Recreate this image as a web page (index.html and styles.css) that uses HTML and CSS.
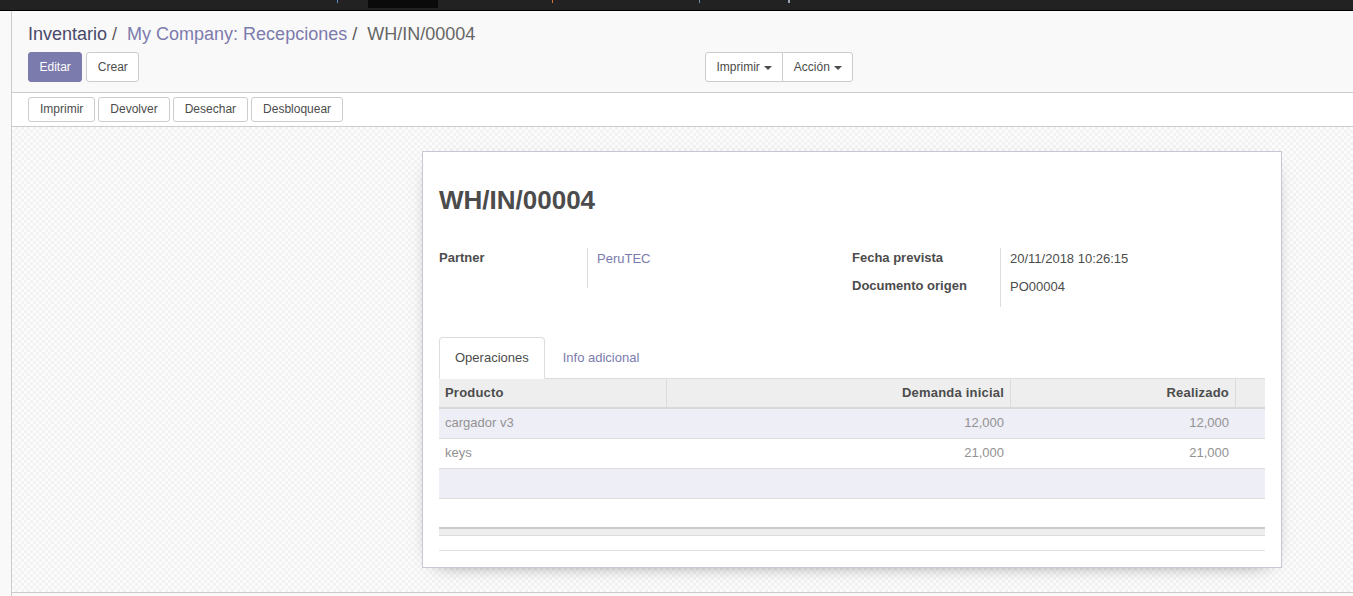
FILE: index.html
```html
<!DOCTYPE html>
<html lang="es">
<head>
<meta charset="utf-8">
<title>WH/IN/00004</title>
<link rel="stylesheet" href="styles.css">
</head>
<body>
<header class="navbar">
  <span class="nav-mark mark-1"></span>
  <span class="nav-active"></span>
  <span class="nav-mark mark-2"></span>
  <span class="nav-mark mark-3"></span>
  <span class="nav-mark mark-4"></span>
</header>
<div class="main">
  <aside class="sidebar"></aside>
  <div class="action">
    <div class="control-panel">
      <ol class="breadcrumb">
        <li><a class="bc-first" href="#">Inventario</a></li>
        <li class="bc-sep">/&nbsp;</li>
        <li><a class="bc-link" href="#">My Company: Recepciones</a></li>
        <li class="bc-sep">/&nbsp;</li>
        <li class="bc-active">WH/IN/00004</li>
      </ol>
      <div class="cp-row">
        <div class="cp-left">
          <button class="btn btn-primary">Editar</button>
          <button class="btn">Crear</button>
        </div>
        <div class="btn-group">
          <button class="btn">Imprimir<span class="caret"></span></button>
          <button class="btn">Acción<span class="caret"></span></button>
        </div>
      </div>
    </div>
    <div class="statusbar">
      <button class="btn btn-status">Imprimir</button>
      <button class="btn btn-status">Devolver</button>
      <button class="btn btn-status">Desechar</button>
      <button class="btn btn-status">Desbloquear</button>
    </div>
    <div class="sheet-bg">
      <div class="sheet">
        <h1 class="title">WH/IN/00004</h1>
        <div class="groups">
          <div class="group group-left">
            <div class="label">Partner</div>
            <div class="value"><a href="#" class="link">PeruTEC</a></div>
          </div>
          <div class="group group-right">
            <div class="label">Fecha prevista</div>
            <div class="value">20/11/2018 10:26:15</div>
            <div class="label">Documento origen</div>
            <div class="value">PO00004</div>
          </div>
        </div>
        <div class="notebook">
          <ul class="tabs">
            <li class="tab active">Operaciones</li>
            <li class="tab"><a href="#" class="link">Info adicional</a></li>
          </ul>
          <table class="list">
            <thead>
              <tr>
                <th class="c1">Producto</th>
                <th class="c2 num">Demanda inicial</th>
                <th class="c3 num">Realizado</th>
                <th class="c4"></th>
              </tr>
            </thead>
            <tbody>
              <tr class="odd">
                <td>cargador v3</td>
                <td class="num">12,000</td>
                <td class="num">12,000</td>
                <td></td>
              </tr>
              <tr>
                <td>keys</td>
                <td class="num">21,000</td>
                <td class="num">21,000</td>
                <td></td>
              </tr>
              <tr class="odd">
                <td>&nbsp;</td>
                <td></td>
                <td></td>
                <td></td>
              </tr>
              <tr class="filler">
                <td>&nbsp;</td>
                <td></td>
                <td></td>
                <td></td>
              </tr>
            </tbody>
          </table>
          <div class="list-foot"></div>
          <div class="bottom-line"></div>
        </div>
      </div>
    </div>
  </div>
</div>
</body>
</html>
```
FILE: styles.css
```css
* {
  box-sizing: border-box;
}

html,
body {
  margin: 0;
  height: 100%;
}

body {
  font-family: "Liberation Sans", Arial, sans-serif;
  font-size: 13px;
  line-height: 1.42857;
  color: #4c4c4c;
  background: #fafafa;
  overflow: hidden;
}

a {
  text-decoration: none;
}

/* top navbar (cropped) */
.navbar {
  height: 11px;
  background: #222222;
  border-bottom: 1px solid #000;
  display: flex;
  align-items: flex-start;
}

.nav-mark {
  width: 1px;
  height: 3px;
}

.mark-1 {
  margin-left: 337px;
  background: #5b8fcf;
}

.nav-active {
  margin-left: 30px;
  width: 70px;
  height: 8px;
  background: #0a0a0a;
}

.mark-2 {
  margin-left: 114px;
  background: #d9733c;
}

.mark-3 {
  margin-left: 146px;
  background: #6b8fbf;
}

.mark-4 {
  margin-left: 88px;
  width: 2px;
  background: #9aa6b8;
}

.main {
  display: flex;
  height: 585px;
}

.sidebar {
  flex: 0 0 12px;
  background: #f9f9f9;
  border-right: 1px solid #cccccc;
}

.action {
  flex: 1;
  display: flex;
  flex-direction: column;
  min-width: 0;
}

/* control panel */
.control-panel {
  background: #f9f9f9;
  border-bottom: 1px solid #cccccc;
  padding: 10px 16px;
}

.breadcrumb {
  display: flex;
  list-style: none;
  margin: 0 0 5px;
  padding: 0;
  font-size: 18px;
  line-height: 26px;
}

.bc-first {
  color: #48486a;
}

.bc-link {
  color: #7c7bad;
}

.bc-sep {
  padding: 0 5px;
  color: #5a5a5a;
}

.bc-active {
  color: #666666;
}

.cp-row {
  display: flex;
}

.cp-left {
  flex: 0 0 677px;
  display: flex;
  gap: 4px;
}

.btn {
  font-family: "Liberation Sans", Arial, sans-serif;
  font-size: 12px;
  line-height: 18px;
  padding: 5px 10.5px;
  border: 1px solid #cccccc;
  border-radius: 3px;
  background: #ffffff;
  color: #4c4c4c;
  cursor: pointer;
}

.btn-primary {
  background: #7c7bad;
  border-color: #7c7bad;
  color: #ffffff;
}

.btn-group {
  display: flex;
}

.btn-group .btn:first-child {
  border-radius: 3px 0 0 3px;
}

.btn-group .btn + .btn {
  margin-left: -1px;
  border-radius: 0 3px 3px 0;
}

.caret {
  display: inline-block;
  width: 0;
  height: 0;
  margin-left: 4px;
  vertical-align: middle;
  border-top: 4px solid #4c4c4c;
  border-left: 4px solid transparent;
  border-right: 4px solid transparent;
}

/* status bar */
.statusbar {
  background: #ffffff;
  border-bottom: 1px solid #cccccc;
  height: 34px;
  padding-left: 16px;
  display: flex;
  align-items: flex-start;
}

.btn-status {
  margin: 4px 3px 0 0;
  padding: 3px 11px;
  line-height: 17px;
}

/* sheet background */
.sheet-bg {
  height: 466px;
  border-bottom: 1px solid #cccccc;
  padding: 24px 0 0 410px;
  background-color: #fcfcfc;
  background-image: repeating-conic-gradient(#f2f2f2 0 25%, transparent 0 50%);
  background-size: 6px 6px;
}

.sheet {
  width: 860px;
  background: #ffffff;
  border: 1px solid #c8c8d3;
  box-shadow: 0 5px 20px -15px #000000;
  padding: 0 16px 16px;
}

.title {
  margin: 30px 0 0;
  font-size: 26px;
  line-height: 36px;
  font-weight: bold;
  color: #4c4c4c;
}

.groups {
  display: flex;
  margin-top: 30px;
}

.group {
  flex: 0 0 50%;
  display: grid;
  grid-template-columns: 149px 1fr;
  align-content: start;
}

.group-left {
  grid-template-rows: 40px;
}

.group-right {
  grid-template-rows: 28px 31px;
}

.label {
  font-weight: bold;
  line-height: 18px;
  padding-top: 1px;
  border-right: 1px solid #dddddd;
}

.value {
  line-height: 18px;
  padding: 2px 0 0 9px;
}

.link {
  color: #7c7bad;
}

/* notebook */
.notebook {
  margin-top: 30px;
}

.tabs {
  display: flex;
  list-style: none;
  margin: 0;
  padding: 0;
  border-bottom: 1px solid #dddddd;
}

.tab {
  margin-right: 2px;
  margin-bottom: -1px;
  padding: 10px 15px;
  line-height: 20px;
  border: 1px solid transparent;
  border-radius: 4px 4px 0 0;
}

.tab.active {
  background: #ffffff;
  border-color: #dddddd #dddddd transparent;
  color: #4c4c4c;
}

.list {
  width: 100%;
  border-collapse: separate;
  border-spacing: 0;
  table-layout: fixed;
}

.list th {
  background: #eeeeee;
  font-weight: bold;
  text-align: left;
  padding: 5px 6px;
  line-height: 18px;
  border-bottom: 2px solid #d8d8d8;
  color: #4c4c4c;
  letter-spacing: 0.2px;
}

.list th + th {
  border-left: 1px solid #dcdcdc;
}

.list .c1 {
  width: 227px;
}

.list .c2 {
  width: 344px;
}

.list .c3 {
  width: 225px;
}

.list .c4 {
  width: 30px;
}

.list td {
  padding: 5px 6px 6px;
  line-height: 18px;
  border-bottom: 1px solid #dddddd;
  color: #929292;
  white-space: nowrap;
}

.list .num {
  text-align: right;
}

.list tr.odd td {
  background: #eeeef6;
}

.list tr.filler td {
  border-bottom: none;
  padding: 5px;
}

.list-foot {
  height: 9px;
  border-top: 2px solid #cacaca;
  border-bottom: 1px solid #dddddd;
  background: #eeeeee;
}

.bottom-line {
  margin-top: 14px;
  border-top: 1px solid #e0e0e0;
}
```
